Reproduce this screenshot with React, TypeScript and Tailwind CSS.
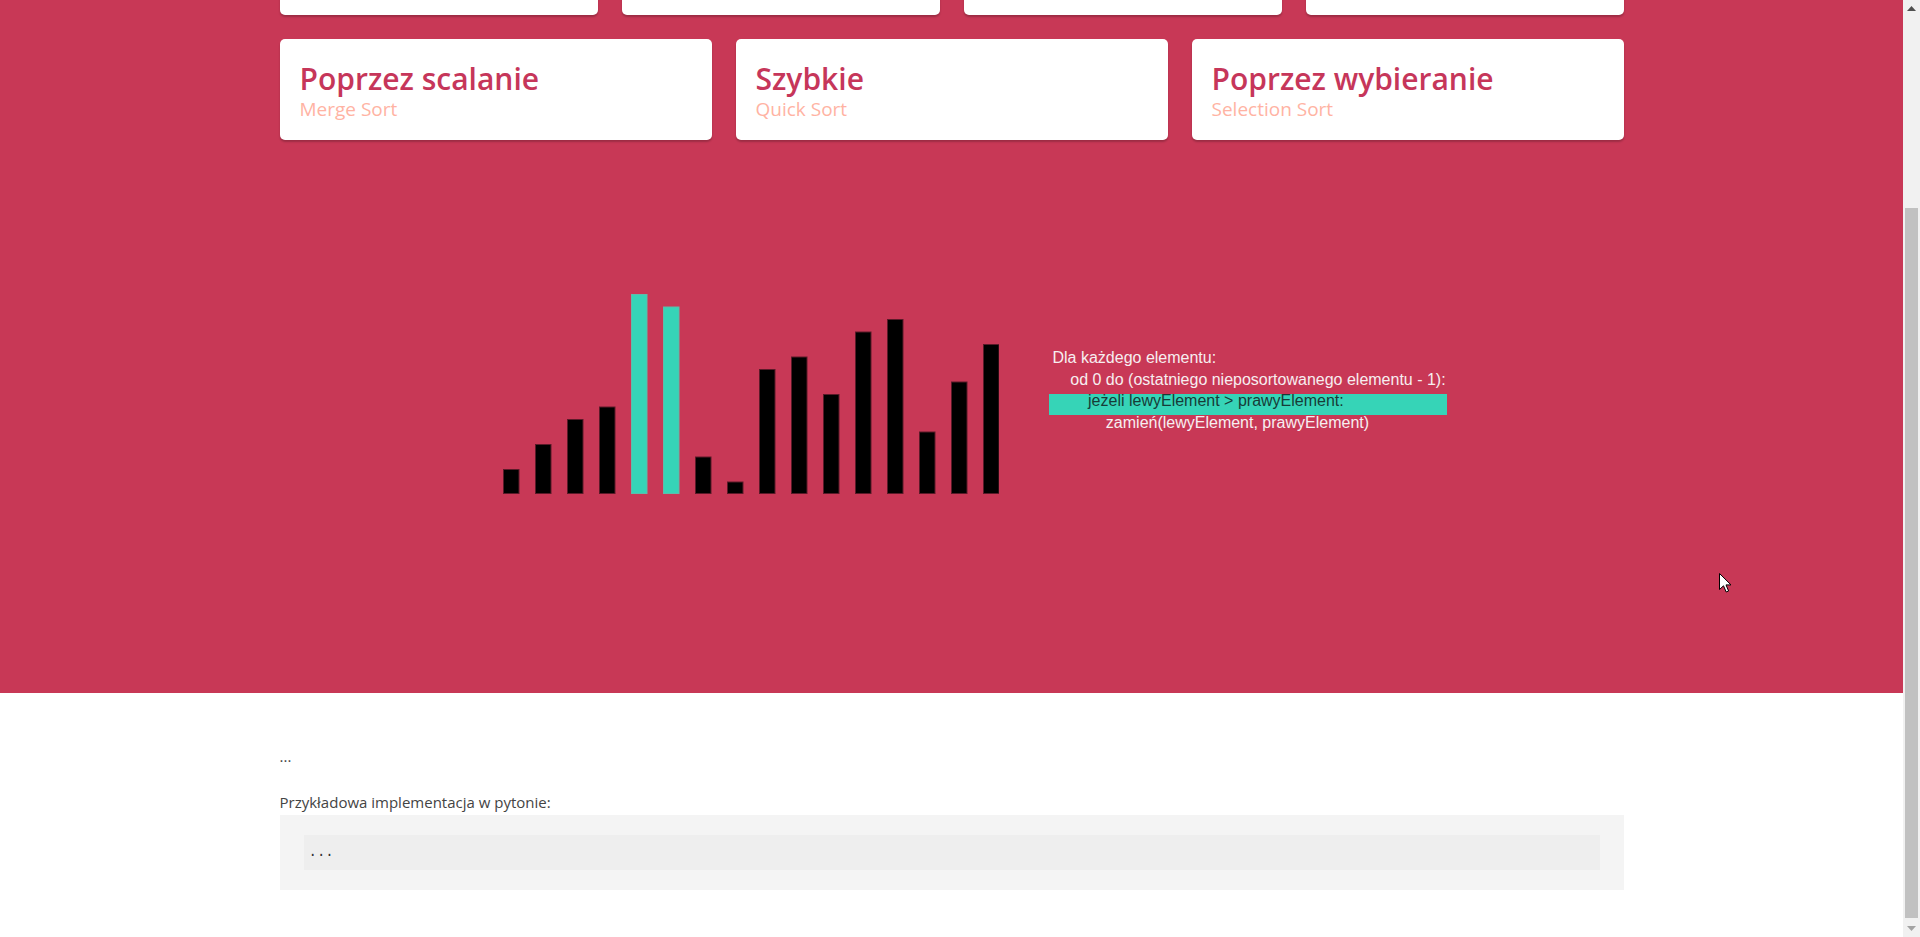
import React from "react";

const bars = [2, 4, 6, 7, 16, 15, 3, 1, 10, 11, 8, 13, 14, 5, 9, 12];
const active = [4, 5];

const cardFont = { fontFamily: '"Open Sans", "Noto Sans", sans-serif' };

function SortCard({ title, sub }: { title: string; sub: string }) {
  return (
    <div className="h-[101px] rounded-[5px] bg-white pl-[20px] pt-[19px] shadow-[0_2px_2px_rgba(0,0,0,0.22)]">
      <div className="text-[30px] font-semibold leading-[41px] text-[#c6365a]">{title}</div>
      <div className="text-[19px] leading-[20px] text-[#ffb3a3]">{sub}</div>
    </div>
  );
}

function Chart() {
  return (
    <svg width="496" height="200" viewBox="0 0 496 200" className="block shrink-0">
      {bars.map((v, i) => {
        const h = v * 12.5;
        return (
          <rect
            key={i}
            x={i * 32 + 0.5}
            y={200 - h + 0.5}
            width={15.5}
            height={h - 1}
            fill={active.includes(i) ? "#36d4b7" : "#000000"}
            stroke={active.includes(i) ? "#5fbcaa" : "#5a1a28"}
            strokeWidth={1}
          />
        );
      })}
    </svg>
  );
}

const sp = (n: number) => "\u00a0".repeat(n);

function Code() {
  const lines = [
    { t: "Dla każdego elementu:", ind: 0 },
    { t: "od 0 do (ostatniego nieposortowanego elementu - 1):", ind: 4 },
    { t: "jeżeli lewyElement > prawyElement:", ind: 8, hl: true },
    { t: "zamień(lewyElement, prawyElement)", ind: 12 },
  ];
  return (
    <div
      className="mt-[54px] text-[16px] leading-[21.7px]"
      style={{ fontFamily: '"Liberation Sans", Arial, sans-serif' }}
    >
      {lines.map((l, i) => (
        <div key={i} className={"relative whitespace-pre pl-[4px] " + (l.hl ? "text-[#173c37]" : "text-[#f7eef0]")}>
          {l.hl && <div className="absolute left-0 top-[3.5px] h-[21px] w-[398px] bg-[#36d4b7]" />}
          <span className="relative">{sp(l.ind) + l.t}</span>
        </div>
      ))}
    </div>
  );
}

function Scrollbar() {
  return (
    <div className="flex h-[937px] w-[17px] shrink-0 flex-col bg-[#f1f1f1]">
      <div className="flex h-[17px] items-center justify-center">
        <svg width="9" height="5" viewBox="0 0 9 5">
          <path d="M4.5 0 L9 5 L0 5 Z" fill="#505050" />
        </svg>
      </div>
      <div className="h-[191px]" />
      <div className="mx-[2px] h-[710px] bg-[#c1c1c1]" />
      <div className="h-[2px]" />
      <div className="flex h-[17px] items-center justify-center">
        <svg width="9" height="5" viewBox="0 0 9 5">
          <path d="M0 0 L9 0 L4.5 5 Z" fill="#a3a3a3" />
        </svg>
      </div>
    </div>
  );
}

export default function App() {
  return (
    <div className="relative flex h-[937px] w-full overflow-hidden bg-white">
      <div className="flex min-w-0 flex-1 flex-col">
        <section className="h-[693px] shrink-0 bg-[#c83856]" style={cardFont}>
          <div className="mx-auto w-[1344px]">
            <div className="-mt-[86px] grid grid-cols-4 gap-[24px]">
              <div className="h-[101px] rounded-[5px] bg-white shadow-[0_2px_2px_rgba(0,0,0,0.22)]" />
              <div className="h-[101px] rounded-[5px] bg-white shadow-[0_2px_2px_rgba(0,0,0,0.22)]" />
              <div className="h-[101px] rounded-[5px] bg-white shadow-[0_2px_2px_rgba(0,0,0,0.22)]" />
              <div className="h-[101px] rounded-[5px] bg-white shadow-[0_2px_2px_rgba(0,0,0,0.22)]" />
            </div>
            <div className="mt-[24px] grid grid-cols-3 gap-[24px]">
              <SortCard title="Poprzez scalanie" sub="Merge Sort" />
              <SortCard title="Szybkie" sub="Quick Sort" />
              <SortCard title="Poprzez wybieranie" sub="Selection Sort" />
            </div>
            <div className="flex items-start gap-[50px] pl-[223px] pt-[154px]">
              <Chart />
              <div className="-mt-[1px]">
                <Code />
              </div>
            </div>
          </div>
        </section>
        <section className="flex-1 bg-white text-[#444444]" style={cardFont}>
          <div className="mx-auto w-[1344px] pt-[51px]">
            <p className="text-[15px] leading-[24px]">...</p>
            <p className="mt-[23px] text-[15px] leading-[22px]">Przykładowa implementacja w pytonie:</p>
            <div className="mt-[2px] bg-[#f4f4f4] px-[24px] pb-[20px] pt-[20px]">
              <div
                className="flex h-[35px] items-center bg-[#eeeeee] pl-[5px] text-[14px] text-[#333333]"
                style={{ fontFamily: '"Liberation Mono", "Courier New", monospace' }}
              >
                ...
              </div>
            </div>
          </div>
        </section>
      </div>
      <Scrollbar />
      <svg
        className="absolute left-[1719px] top-[573px]"
        width="13"
        height="20"
        viewBox="0 0 13 20"
      >
        <path
          d="M0.5 0.5 L0.5 16.5 L4.5 12.8 L7.2 19 L9.6 18 L7 11.9 L12 11.9 Z"
          fill="#ffffff"
          stroke="#000000"
          strokeWidth="1"
          strokeLinejoin="miter"
        />
      </svg>
    </div>
  );
}
